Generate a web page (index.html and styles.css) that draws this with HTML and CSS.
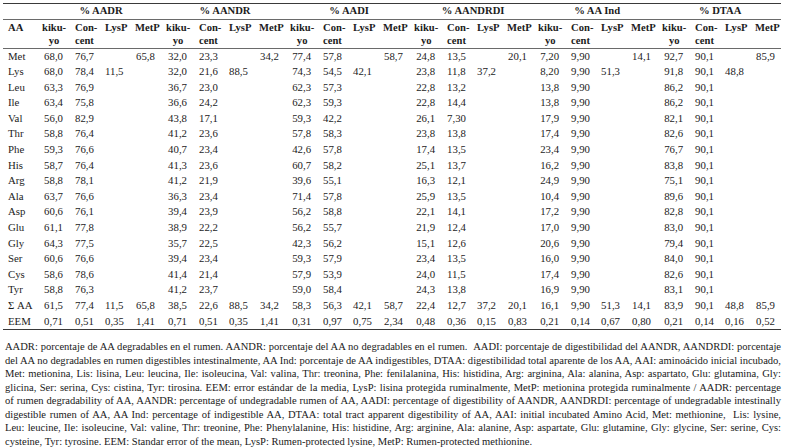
FILE: index.html
```html
<!DOCTYPE html>
<html lang="es">
<head>
<meta charset="utf-8">
<title>Tabla AA</title>
<link rel="stylesheet" href="styles.css">
</head>
<body>
<div class="page">
<table class="aa-table">
  <colgroup>
    <col class="c-aa">
    <col class="c-kiku"><col class="c-con"><col class="c-lys"><col class="c-met">
    <col class="c-kiku"><col class="c-con"><col class="c-lys"><col class="c-met">
    <col class="c-kiku"><col class="c-con"><col class="c-lys"><col class="c-met">
    <col class="c-kiku"><col class="c-con"><col class="c-lys"><col class="c-met">
    <col class="c-kiku"><col class="c-con"><col class="c-lys"><col class="c-met">
    <col class="c-kiku"><col class="c-con"><col class="c-lys"><col class="c-met-last">
  </colgroup>
  <thead>
    <tr class="grp-row">
      <th></th>
      <th colspan="4">% AADR</th>
      <th colspan="4">% AANDR</th>
      <th colspan="4">% AADI</th>
      <th colspan="4">% AANDRDI</th>
      <th colspan="4">% AA Ind</th>
      <th colspan="4">% DTAA</th>
    </tr>
    <tr class="col-row">
      <th class="aa">AA</th>
      <th><span class="kk">kiku-<br>yo</span></th><th>Con-<br>cent</th><th>LysP</th><th>MetP</th>
      <th><span class="kk">kiku-<br>yo</span></th><th>Con-<br>cent</th><th>LysP</th><th>MetP</th>
      <th><span class="kk">kiku-<br>yo</span></th><th>Con-<br>cent</th><th>LysP</th><th>MetP</th>
      <th><span class="kk">kiku-<br>yo</span></th><th>Con-<br>cent</th><th>LysP</th><th>MetP</th>
      <th><span class="kk">kiku-<br>yo</span></th><th>Con-<br>cent</th><th>LysP</th><th>MetP</th>
      <th><span class="kk">kiku-<br>yo</span></th><th>Con-<br>cent</th><th>LysP</th><th>MetP</th>
    </tr>
  </thead>
  <tbody>
    <tr><td class="aa">Met</td><td class="k">68,0</td><td>76,7</td><td></td><td class="m">65,8</td><td class="k">32,0</td><td>23,3</td><td></td><td class="m">34,2</td><td class="k">77,4</td><td>57,8</td><td></td><td class="m">58,7</td><td class="k">24,8</td><td>13,5</td><td></td><td class="m">20,1</td><td class="k">7,20</td><td>9,90</td><td></td><td class="m">14,1</td><td class="k">92,7</td><td>90,1</td><td></td><td class="m">85,9</td></tr>
    <tr><td class="aa">Lys</td><td class="k">68,0</td><td>78,4</td><td>11,5</td><td></td><td class="k">32,0</td><td>21,6</td><td>88,5</td><td></td><td class="k">74,3</td><td>54,5</td><td>42,1</td><td></td><td class="k">23,8</td><td>11,8</td><td>37,2</td><td></td><td class="k">8,20</td><td>9,90</td><td>51,3</td><td></td><td class="k">91,8</td><td>90,1</td><td>48,8</td><td></td></tr>
    <tr><td class="aa">Leu</td><td class="k">63,3</td><td>76,9</td><td></td><td></td><td class="k">36,7</td><td>23,0</td><td></td><td></td><td class="k">62,3</td><td>57,3</td><td></td><td></td><td class="k">22,8</td><td>13,2</td><td></td><td></td><td class="k">13,8</td><td>9,90</td><td></td><td></td><td class="k">86,2</td><td>90,1</td><td></td><td></td></tr>
    <tr><td class="aa">Ile</td><td class="k">63,4</td><td>75,8</td><td></td><td></td><td class="k">36,6</td><td>24,2</td><td></td><td></td><td class="k">62,3</td><td>59,3</td><td></td><td></td><td class="k">22,8</td><td>14,4</td><td></td><td></td><td class="k">13,8</td><td>9,90</td><td></td><td></td><td class="k">86,2</td><td>90,1</td><td></td><td></td></tr>
    <tr><td class="aa">Val</td><td class="k">56,0</td><td>82,9</td><td></td><td></td><td class="k">43,8</td><td>17,1</td><td></td><td></td><td class="k">59,3</td><td>42,2</td><td></td><td></td><td class="k">26,1</td><td>7,30</td><td></td><td></td><td class="k">17,9</td><td>9,90</td><td></td><td></td><td class="k">82,1</td><td>90,1</td><td></td><td></td></tr>
    <tr><td class="aa">Thr</td><td class="k">58,8</td><td>76,4</td><td></td><td></td><td class="k">41,2</td><td>23,6</td><td></td><td></td><td class="k">57,8</td><td>58,3</td><td></td><td></td><td class="k">23,8</td><td>13,8</td><td></td><td></td><td class="k">17,4</td><td>9,90</td><td></td><td></td><td class="k">82,6</td><td>90,1</td><td></td><td></td></tr>
    <tr><td class="aa">Phe</td><td class="k">59,3</td><td>76,6</td><td></td><td></td><td class="k">40,7</td><td>23,4</td><td></td><td></td><td class="k">42,6</td><td>57,8</td><td></td><td></td><td class="k">17,4</td><td>13,5</td><td></td><td></td><td class="k">23,4</td><td>9,90</td><td></td><td></td><td class="k">76,7</td><td>90,1</td><td></td><td></td></tr>
    <tr><td class="aa">His</td><td class="k">58,7</td><td>76,4</td><td></td><td></td><td class="k">41,3</td><td>23,6</td><td></td><td></td><td class="k">60,7</td><td>58,2</td><td></td><td></td><td class="k">25,1</td><td>13,7</td><td></td><td></td><td class="k">16,2</td><td>9,90</td><td></td><td></td><td class="k">83,8</td><td>90,1</td><td></td><td></td></tr>
    <tr><td class="aa">Arg</td><td class="k">58,8</td><td>78,1</td><td></td><td></td><td class="k">41,2</td><td>21,9</td><td></td><td></td><td class="k">39,6</td><td>55,1</td><td></td><td></td><td class="k">16,3</td><td>12,1</td><td></td><td></td><td class="k">24,9</td><td>9,90</td><td></td><td></td><td class="k">75,1</td><td>90,1</td><td></td><td></td></tr>
    <tr><td class="aa">Ala</td><td class="k">63,7</td><td>76,6</td><td></td><td></td><td class="k">36,3</td><td>23,4</td><td></td><td></td><td class="k">71,4</td><td>57,8</td><td></td><td></td><td class="k">25,9</td><td>13,5</td><td></td><td></td><td class="k">10,4</td><td>9,90</td><td></td><td></td><td class="k">89,6</td><td>90,1</td><td></td><td></td></tr>
    <tr><td class="aa">Asp</td><td class="k">60,6</td><td>76,1</td><td></td><td></td><td class="k">39,4</td><td>23,9</td><td></td><td></td><td class="k">56,2</td><td>58,8</td><td></td><td></td><td class="k">22,1</td><td>14,1</td><td></td><td></td><td class="k">17,2</td><td>9,90</td><td></td><td></td><td class="k">82,8</td><td>90,1</td><td></td><td></td></tr>
    <tr><td class="aa">Glu</td><td class="k">61,1</td><td>77,8</td><td></td><td></td><td class="k">38,9</td><td>22,2</td><td></td><td></td><td class="k">56,2</td><td>55,7</td><td></td><td></td><td class="k">21,9</td><td>12,4</td><td></td><td></td><td class="k">17,0</td><td>9,90</td><td></td><td></td><td class="k">83,0</td><td>90,1</td><td></td><td></td></tr>
    <tr><td class="aa">Gly</td><td class="k">64,3</td><td>77,5</td><td></td><td></td><td class="k">35,7</td><td>22,5</td><td></td><td></td><td class="k">42,3</td><td>56,2</td><td></td><td></td><td class="k">15,1</td><td>12,6</td><td></td><td></td><td class="k">20,6</td><td>9,90</td><td></td><td></td><td class="k">79,4</td><td>90,1</td><td></td><td></td></tr>
    <tr><td class="aa">Ser</td><td class="k">60,6</td><td>76,6</td><td></td><td></td><td class="k">39,4</td><td>23,4</td><td></td><td></td><td class="k">59,3</td><td>57,9</td><td></td><td></td><td class="k">23,4</td><td>13,5</td><td></td><td></td><td class="k">16,0</td><td>9,90</td><td></td><td></td><td class="k">84,0</td><td>90,1</td><td></td><td></td></tr>
    <tr><td class="aa">Cys</td><td class="k">58,6</td><td>78,6</td><td></td><td></td><td class="k">41,4</td><td>21,4</td><td></td><td></td><td class="k">57,9</td><td>53,9</td><td></td><td></td><td class="k">24,0</td><td>11,5</td><td></td><td></td><td class="k">17,4</td><td>9,90</td><td></td><td></td><td class="k">82,6</td><td>90,1</td><td></td><td></td></tr>
    <tr><td class="aa">Tyr</td><td class="k">58,8</td><td>76,3</td><td></td><td></td><td class="k">41,2</td><td>23,7</td><td></td><td></td><td class="k">59,0</td><td>58,4</td><td></td><td></td><td class="k">24,3</td><td>13,8</td><td></td><td></td><td class="k">16,9</td><td>9,90</td><td></td><td></td><td class="k">83,1</td><td>90,1</td><td></td><td></td></tr>
    <tr><td class="aa">&Sigma; AA</td><td class="k">61,5</td><td>77,4</td><td>11,5</td><td class="m">65,8</td><td class="k">38,5</td><td>22,6</td><td>88,5</td><td class="m">34,2</td><td class="k">58,3</td><td>56,3</td><td>42,1</td><td class="m">58,7</td><td class="k">22,4</td><td>12,7</td><td>37,2</td><td class="m">20,1</td><td class="k">16,1</td><td>9,90</td><td>51,3</td><td class="m">14,1</td><td class="k">83,9</td><td>90,1</td><td>48,8</td><td class="m">85,9</td></tr>
    <tr><td class="aa">EEM</td><td class="k">0,71</td><td>0,51</td><td>0,35</td><td class="m">1,41</td><td class="k">0,71</td><td>0,51</td><td>0,35</td><td class="m">1,41</td><td class="k">0,31</td><td>0,97</td><td>0,75</td><td class="m">2,34</td><td class="k">0,48</td><td>0,36</td><td>0,15</td><td class="m">0,83</td><td class="k">0,21</td><td>0,14</td><td>0,67</td><td class="m">0,80</td><td class="k">0,21</td><td>0,14</td><td>0,16</td><td class="m">0,52</td></tr>
  </tbody>
</table>

<p class="notes">
  <span class="ln">AADR: porcentaje de AA degradables en el rumen. AANDR: porcentaje del AA no degradables en el rumen. &nbsp;AADI: porcentaje de digestibilidad del AANDR, AANDRDI: porcentaje</span>
  <span class="ln">del AA no degradables en rumen digestibles intestinalmente, AA Ind: porcentaje de AA indigestibles, DTAA: digestibilidad total aparente de los AA, AAI: aminoácido inicial incubado,</span>
  <span class="ln">Met: metionina, Lis: lisina, Leu: leucina, Ile: isoleucina, Val: valina, Thr: treonina, Phe: fenilalanina, His: histidina, Arg: arginina, Ala: alanina, Asp: aspartato, Glu: glutamina, Gly:</span>
  <span class="ln">glicina, Ser: serina, Cys: cistina, Tyr: tirosina. EEM: error estándar de la media, LysP: lisina protegida ruminalmente, MetP: metionina protegida ruminalmente / AADR: percentage</span>
  <span class="ln">of rumen degradability of AA, AANDR: percentage of undegradable rumen of AA, AADI: percentage of digestibility of AANDR, AANDRDI: percentage of undegradable intestinally</span>
  <span class="ln">digestible rumen of AA, AA Ind: percentage of indigestible AA, DTAA: total tract apparent digestibility of AA, AAI: initial incubated Amino Acid, Met: methionine, &nbsp;Lis: lysine,</span>
  <span class="ln">Leu: leucine, Ile: isoleucine, Val: valine, Thr: treonine, Phe: Phenylalanine, His: histidine, Arg: arginine, Ala: alanine, Asp: aspartate, Glu: glutamine, Gly: glycine, Ser: serine, Cys:</span>
  <span class="ln last">cysteine, Tyr: tyrosine. EEM: Standar error of the mean, LysP: Rumen-protected lysine, MetP: Rumen-protected methionine.</span>
</p>
</div>
</body>
</html>
```

FILE: styles.css
```css
html, body {
  margin: 0;
  padding: 0;
  background: #ffffff;
}

.page {
  padding: 3px 5px 0 3px;
  font-family: "Liberation Serif", "Times New Roman", serif;
  color: #1c1c1c;
}

.aa-table {
  border-collapse: collapse;
  table-layout: fixed;
  width: 778px;
  font-size: 10.8px;
}

.c-aa { width: 36px; }
.c-kiku { width: 33px; }
.c-con { width: 30px; }
.c-lys { width: 30px; }
.c-met { width: 31px; }
.c-met-last { width: 29px; }

.aa-table th,
.aa-table td {
  padding: 0 0 0 3px;
  text-align: left;
  white-space: nowrap;
}

.aa-table th {
  font-weight: bold;
  font-size: 10.6px;
  vertical-align: top;
}

.grp-row th {
  border-top: 1px solid #3a3a3a;
  border-bottom: 1px solid #6a6a6a;
  text-align: center;
  height: 14.5px;
  line-height: 14.5px;
  padding: 0;
}

.col-row th {
  line-height: 13.5px;
  padding-top: 1px;
  padding-bottom: 0;
  border-bottom: 1px solid #6a6a6a;
}

.col-row th.aa {
  padding-left: 5px;
}

.kk {
  display: inline-block;
  text-align: center;
}

.aa-table tbody td {
  height: 15.6px;
  line-height: 15.6px;
}

.aa-table td.aa {
  padding-left: 5px;
}

.aa-table td.k {
  text-align: right;
  padding-left: 0;
  padding-right: 9px;
}

.aa-table td.m {
  padding-left: 4px;
}

.aa-table tbody tr:last-child td {
  border-bottom: 1.5px solid #3a3a3a;
}

.notes {
  margin: 10px 0 0 2px;
  width: 776px;
  font-size: 10.55px;
  line-height: 13.5px;
  color: #1a1a1a;
}

.ln {
  display: block;
  white-space: nowrap;
  text-align: justify;
  text-align-last: justify;
}

.ln.last {
  text-align-last: left;
}
```
